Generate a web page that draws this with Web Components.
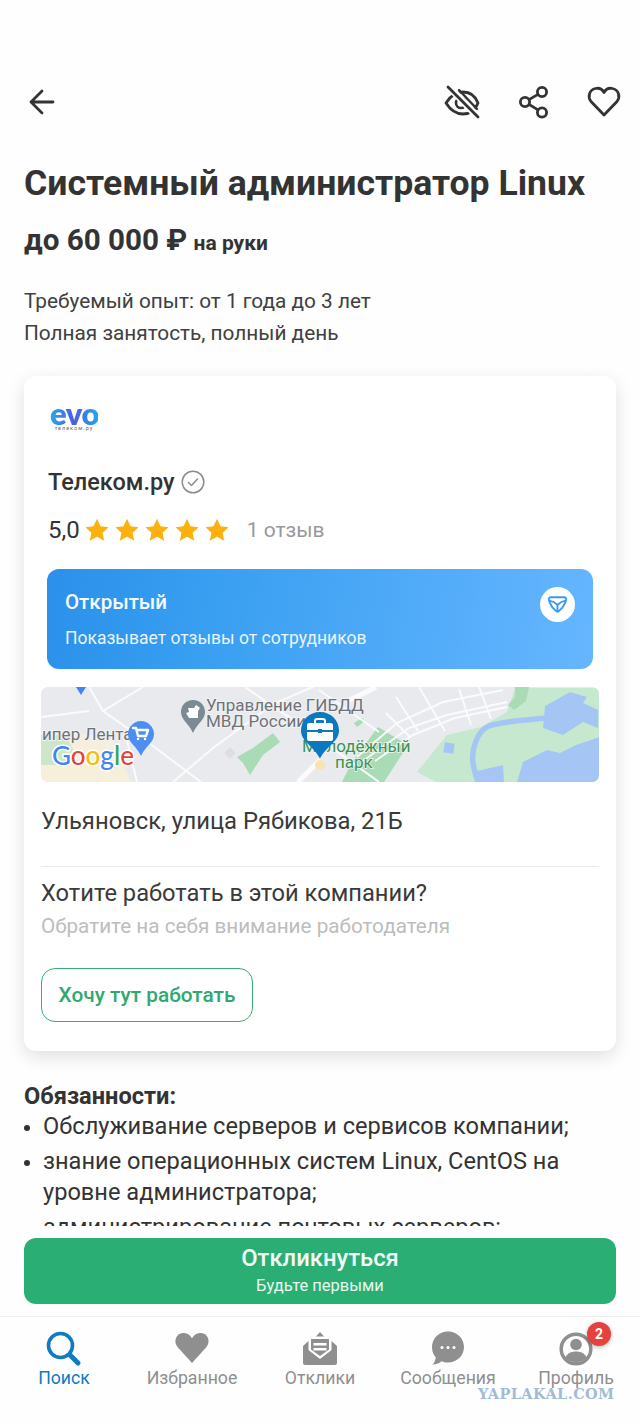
<!DOCTYPE html>
<html lang="ru">
<head>
<meta charset="utf-8">
<title>Системный администратор Linux</title>
<style>
  html, body { margin: 0; padding: 0; background: #fefefe; }
  body { width: 640px; height: 1423px; overflow: hidden; font-family: Roboto, "Liberation Sans", sans-serif; color: #333; }
</style>
</head>
<body>
<job-page>
  <app-toolbar></app-toolbar>
  <job-summary title-text="Системный администратор Linux" salary="до 60 000 ₽" salary-note="на руки">
    <div>Требуемый опыт: от 1 года до 3 лет</div>
    <div>Полная занятость, полный день</div>
  </job-summary>
  <company-card name="Телеком.ру" rating="5,0" reviews="1 отзыв" address="Ульяновск, улица Рябикова, 21Б"></company-card>
  <job-duties heading="Обязанности:">
    <duty-item>Обслуживание серверов и сервисов компании;</duty-item>
    <duty-item>знание операционных систем Linux, CentOS на уровне администратора;</duty-item>
    <duty-item>администрирование почтовых серверов;</duty-item>
  </job-duties>
  <apply-button slot="footer" label="Откликнуться" note="Будьте первыми"></apply-button>
  <bottom-nav slot="footer"></bottom-nav>
</job-page>

<script>
class JobPage extends HTMLElement {
    constructor() {
        super();
        this.attachShadow({ mode: 'open' });
        this.shadowRoot.innerHTML = `
            <style>
                :host { display: flex; flex-direction: column; height: 1423px; position: relative; }
                .content { height: 1226px; overflow: hidden; flex: none; }
            </style>
            <div class="content"><slot></slot></div>
            <slot name="footer"></slot>
        `;
    }
}
customElements.define('job-page', JobPage);

class AppToolbar extends HTMLElement {
    constructor() {
        super();
        this.attachShadow({ mode: 'open' });
        this.shadowRoot.innerHTML = `
            <style>
                :host { display: flex; align-items: center; height: 36px; padding: 84px 18px 0 24px; }
                svg { width: 36px; height: 36px; display: block; fill: none; stroke: #333; stroke-width: 2.800; stroke-linecap: round; stroke-linejoin: round; }
                .spacer { flex: 1; }
                .share { margin: 0 34px 0 36px; }
            </style>
            <svg viewBox="0 0 36 36"><path d="M7 18h22M18 7 7 18l11 11"/></svg>
            <div class="spacer"></div>
            <svg viewBox="0 0 36 36">
                <path d="M2 19C7 11 12 8 19 8c7 0 12 3 15 11-3 8-9 11-15 11C12 30 7 27 2 19z"/>
                <circle cx="17" cy="19" r="5" stroke-width="2.600"/>
                <path d="M7 5l26 27" stroke="#fefefe" stroke-width="7"/>
                <path d="M4 3l30 30"/>
                <path d="M15 6l18 19" stroke-width="2.400"/>
            </svg>
            <svg class="share" viewBox="0 0 36 36">
                <circle cx="9" cy="18" r="4.600"/><circle cx="26" cy="8" r="4.600"/><circle cx="26" cy="28.500" r="4.600"/>
                <path d="M13 15.600 22 10.400M13 20.400l9 5.500"/>
            </svg>
            <svg viewBox="0 0 36 36"><path d="M18 31 5 17.500C1.500 13 3 6 9.500 4.500c3.800-.8 6.800.8 8.500 4 1.700-3.200 4.700-4.800 8.500-4C33 6 34.500 13 31 17.500z"/></svg>
        `;
    }
}
customElements.define('app-toolbar', AppToolbar);

class JobSummary extends HTMLElement {
    constructor() {
        super();
        this.attachShadow({ mode: 'open' });
        this.shadowRoot.innerHTML = `
            <style>
                :host { display: block; padding: 41px 24px 0; }
                h1 { margin: 0; font: 700 35.600px/44px Roboto, sans-serif; color: #333; white-space: nowrap; }
                .salary { margin-top: 15px; font: 700 29.600px/40px Roboto, sans-serif; color: #333; }
                .salary small { font-size: 21px; margin-left: -1px; }
                .meta { margin-top: 22px; font: 400 20.800px/32px Roboto, sans-serif; color: #404040; }
            </style>
            <h1 id="title"></h1>
            <div class="salary"><span id="salary"></span> <small id="note"></small></div>
            <div class="meta"><slot></slot></div>
        `;
    }

    connectedCallback() {
        this.shadowRoot.getElementById('title').textContent = this.getAttribute('title-text');
        this.shadowRoot.getElementById('salary').textContent = this.getAttribute('salary');
        this.shadowRoot.getElementById('note').textContent = this.getAttribute('salary-note');
    }
}
customElements.define('job-summary', JobSummary);

class RatingStars extends HTMLElement {
    constructor() {
        super();
        this.attachShadow({ mode: 'open' });
        const star = '<svg viewBox="0 0 24 24"><path d="M12 .8l3.500 7.400 8 1-5.900 5.500 1.600 8L12 18.700l-7.200 4 1.600-8L.5 9.200l8-1z"/></svg>';
        this.shadowRoot.innerHTML = `
            <style>
                :host { display: flex; gap: 6px; }
                svg { width: 24px; height: 24px; display: block; fill: #fdb10e; }
            </style>
            ${star.repeat(5)}
        `;
    }
}
customElements.define('rating-stars', RatingStars);

class OpenBanner extends HTMLElement {
    constructor() {
        super();
        this.attachShadow({ mode: 'open' });
        this.shadowRoot.innerHTML = `
            <style>
                :host { display: flex; align-items: center; justify-content: space-between; height: 100px; margin: 0 6px; padding: 0 18px; border-radius: 12px; color: #fff; background: linear-gradient(100deg, #2a90ea 0%, #399ff1 30%, #66b6ff 100%); box-sizing: border-box; }
                .title { font: 500 20.500px/24px Roboto, sans-serif; color: #f6fbff; }
                .text { margin-top: 13px; font: 400 17.500px/22px Roboto, sans-serif; color: #e9f4ff; }
                .badge { width: 35px; height: 35px; border-radius: 50%; background: #fff; display: flex; align-items: center; justify-content: center; margin-top: -30px; }
                svg { width: 23px; height: 23px; fill: none; stroke: #3a9cf0; stroke-width: 2; stroke-linejoin: round; stroke-linecap: round; }
            </style>
            <div>
                <div class="title">Открытый</div>
                <div class="text">Показывает отзывы от сотрудников</div>
            </div>
            <div class="badge">
                <svg viewBox="0 0 24 24"><path d="M5 4.500h14c1.500 0 2.500 1.200 2 2.700l-1.200 3.300c-1.300 3.500-4 6.500-6.600 8.500-.8.600-1.600.600-2.400 0-2.600-2-5.300-5-6.600-8.500L3 7.200c-.5-1.500.5-2.700 2-2.700z"/><path d="M3.500 8c3 .5 6 2 8.500 4.500C14.500 10 17.500 8.500 20.500 8M12 12.500V19"/></svg>
            </div>
        `;
    }
}
customElements.define('open-banner', OpenBanner);

// Static map picture, coordinates are map pixels from the top left corner
class MapView extends HTMLElement {
    constructor() {
        super();
        this.attachShadow({ mode: 'open' });
        this.shadowRoot.innerHTML = `
            <style>
                :host { display: block; height: 95px; border-radius: 7px; overflow: hidden; background: #e8eaed; position: relative; }
                svg { display: block; width: 100%; height: 100%; }
                text { font-family: Roboto, sans-serif; }
                .label { font-size: 17px; fill: #6e7378; stroke: #f1f2f4; stroke-width: 2px; paint-order: stroke; }
                .park { font-size: 17px; fill: #3c9158; stroke: #eef5ee; stroke-width: 1.500px; paint-order: stroke; }
                .google { font: 500 26px Lato, sans-serif; stroke: #fff; stroke-width: 3px; paint-order: stroke; }
            </style>
            <svg viewBox="0 0 558 95">
                <path d="M0 45h30l40 6 20 44H0z" fill="#f6efdc"/>
                <path d="M0 48h24l8 14-8 16H0z" fill="#cde5c8"/>
                <path d="M196 70l16-9 20-15 7 9-17 13-13 20-7-12z" fill="#a9dbb5"/>
                <rect x="185" y="62" width="8" height="8" fill="#dcdee1" transform="rotate(45 189 66)"/>
                <path d="M337 40l30 18-24 37h-42l10-20z" fill="#a9dbb5"/>
                <path d="M313 36l8-5 3 3-8 6z" fill="#a9dbb5"/>
                <path d="M376 85l30-37 34-8 26-15 8-24h85v94H395z" fill="#c6e8cf"/>
                <path d="M474 0h14l-3 14-12 9-6-5 7-8z" fill="#a9dbb5"/>
                <g fill="none" stroke="#fafbfc" stroke-width="2">
                    <path d="M48 0l14 24 46 32 52 39"/>
                    <path d="M230 17l108 78"/>
                    <path d="M204 0l66 46M278 3l60 42M132 95l40-34 60-44 70-30"/>
                    <path d="M316 70l40-34 46-21 60-12M322 74l46-33 38-13 60-13M334 74l38-26 42-17 52-11"/>
                    <path d="M355 10l22 34M378 0l26 44M418 2l12 36M438 0l12 32M345 26l24 24"/>
                    <path d="M0 30l48-6M62 24l40-24"/>
                    <path d="M86 53l10 42"/>
                </g>
                <path d="M257 95l22-22M305 15l30-15" fill="none" stroke="#fbfbfc" stroke-width="5"/>
                <path d="M504 19l25-14 17 5-4 6 15 7v18l-15-6-20 13-20-7z" fill="#a5c6f5"/>
                <path d="M506 31c-20 2-44 3-58 8-12 5-18 24-16 37 1 7 3 13 5 19" fill="none" stroke="#a5c6f5" stroke-width="5.500"/>
                <path d="M436 84l26-6 1 17h-27zM476 95l6-20 24-12 13 3 16-8 24-8v45z" fill="#a5c6f5"/>
                <rect x="403" y="56" width="10" height="10" fill="#a5c6f5" transform="rotate(8 408 61)"/>
                <path d="M35 0h10l-5 8z" fill="#3f86f0"/>
                <text class="label" x="165" y="24">Управление ГИБДД</text>
                <text class="label" x="165" y="40">МВД России</text>
                <text class="label" x="1" y="53">ипер Лента</text>
                <text class="park" x="261" y="65">Молодёжный</text>
                <text class="park" x="294" y="81">парк</text>
                <path d="M152 13c-7 0-12 5-12 12 0 8 7 10 12 21 5-11 12-13 12-21 0-7-5-12-12-12z" fill="#7b8b96"/>
                <path d="M147 21h6l2-3 4 3-2 3v7h-9l-3-5 3-1z" fill="#fff"/>
                <path d="M100 34c-7 0-13 6-13 13 0 9 8 11 13 22 5-11 13-13 13-22 0-7-6-13-13-13z" fill="#4d8ff0"/>
                <path d="M92 41h3l2 8h8l2-6h-11M97 52h.1M104 52h.1" fill="none" stroke="#fff" stroke-width="2.400" stroke-linejoin="round" stroke-linecap="round"/>
                <text class="google" x="11" y="78"><tspan fill="#4285f4">G</tspan><tspan fill="#ea4335">o</tspan><tspan fill="#fbbc05">o</tspan><tspan fill="#4285f4">g</tspan><tspan fill="#34a853">l</tspan><tspan fill="#ea4335">e</tspan></text>
                <circle cx="279" cy="78" r="5" fill="#f9e3b0"/>
                <path d="M279 25c-10.500 0-19 8-19 18.500 0 11 12 15 19 28 7-13 19-17 19-28C298 33 289.500 25 279 25z" fill="#0b78bf"/>
                <path d="M268 36h22c1 0 2 1 2 2v5h-26v-5c0-1 1-2 2-2zM266 45h26v7c0 1-1 2-2 2h-22c-1 0-2-1-2-2z" fill="#fff"/>
                <path d="M274 36v-2c0-1 1-2 2-2h6c1 0 2 1 2 2v2" fill="none" stroke="#fff" stroke-width="2"/>
                <rect x="277" y="42" width="4" height="4" fill="#0b78bf"/>
            </svg>
        `;
    }
}
customElements.define('map-view', MapView);

class CompanyCard extends HTMLElement {
    constructor() {
        super();
        this.attachShadow({ mode: 'open' });
        this.shadowRoot.innerHTML = `
            <style>
                :host { display: block; margin: 27px 24px 0; padding: 29px 17px 29px; height: 617px; background: #fff; border-radius: 12px; box-shadow: 0 6px 18px rgba(0,0,0,.12); }
                .logo { height: 30px; margin-left: 9px; width: 48px; text-align: center; }
                .evo { font: 800 31px/17px Lato, sans-serif; letter-spacing: -.5px; background: linear-gradient(90deg, #2aa7ea 0%, #4a5ee0 50%, #23a6ee 100%); -webkit-background-clip: text; background-clip: text; color: transparent; display: block; height: 20px; }
                .logo small { display: block; font: 400 5.500px/6px Roboto, sans-serif; letter-spacing: 1px; color: #666; white-space: nowrap; }
                .name { display: flex; align-items: center; gap: 6px; margin: 31px 0 0 7px; font: 500 23.500px/32px Roboto, sans-serif; color: #333; }
                .name svg { width: 24px; height: 24px; fill: none; stroke: #8c8c8c; stroke-width: 1.500; stroke-linecap: round; stroke-linejoin: round; }
                .rating { display: flex; align-items: center; margin: 16px 0 0 7px; height: 32px; font: 400 24px/32px Roboto, sans-serif; color: #333; }
                rating-stars { margin-left: 5px; }
                .reviews { margin-left: 18px; font-size: 21px; color: #999; }
                open-banner { margin-top: 23px; }
                map-view { margin-top: 18px; }
                .address { margin-top: 24px; font: 400 23.800px/30px Roboto, sans-serif; color: #3a3a3a; }
                hr { margin: 30px 0 0; border: 0; height: 1px; background: #e9e9e9; }
                .ask { margin-top: 11px; font: 400 23.700px/30px Roboto, sans-serif; color: #3a3a3a; }
                .hint { margin-top: 5px; font: 400 20.700px/26px Roboto, sans-serif; color: #bdbdbd; }
                button { display: block; margin-top: 29px; width: 212px; height: 54px; box-sizing: border-box; padding: 0; background: #fff; border: 1.500px solid #36ad78; border-radius: 14px; font: 500 20.800px/1 Roboto, sans-serif; color: #2fa96f; }
            </style>
            <div class="logo"><span class="evo">evo</span><small>телеком.ру</small></div>
            <div class="name"><span id="name"></span>
                <svg viewBox="0 0 24 24"><circle cx="12" cy="12" r="10.800"/><path d="M7.500 12.500l3 3 6-6.500"/></svg>
            </div>
            <div class="rating"><span id="rating"></span><rating-stars></rating-stars><span class="reviews" id="reviews"></span></div>
            <open-banner></open-banner>
            <map-view></map-view>
            <div class="address" id="address"></div>
            <hr>
            <div class="ask">Хотите работать в этой компании?</div>
            <div class="hint">Обратите на себя внимание работодателя</div>
            <button>Хочу тут работать</button>
        `;
    }

    connectedCallback() {
        ['name', 'rating', 'reviews', 'address'].forEach(key => {
            this.shadowRoot.getElementById(key).textContent = this.getAttribute(key);
        });
    }
}
customElements.define('company-card', CompanyCard);

class JobDuties extends HTMLElement {
    constructor() {
        super();
        this.attachShadow({ mode: 'open' });
        this.shadowRoot.innerHTML = `
            <style>
                :host { display: block; margin-top: 30px; padding: 0 24px; }
                h2 { margin: 0; font: 700 23.600px/30px Roboto, sans-serif; color: #333; }
            </style>
            <h2 id="heading"></h2>
            <slot></slot>
        `;
    }

    connectedCallback() {
        this.shadowRoot.getElementById('heading').textContent = this.getAttribute('heading');
    }
}
customElements.define('job-duties', JobDuties);

class DutyItem extends HTMLElement {
    constructor() {
        super();
        this.attachShadow({ mode: 'open' });
        this.shadowRoot.innerHTML = `
            <style>
                :host { display: flex; margin-bottom: 4px; font: 400 23.600px/31px Roboto, sans-serif; color: #333; }
                .dot { flex: none; width: 6px; height: 6px; margin: 14px 13px 0 0; border-radius: 50%; background: #333; }
            </style>
            <span class="dot"></span>
            <span><slot></slot></span>
        `;
    }
}
customElements.define('duty-item', DutyItem);

class ApplyButton extends HTMLElement {
    constructor() {
        super();
        this.attachShadow({ mode: 'open' });
        this.shadowRoot.innerHTML = `
            <style>
                :host { display: flex; flex-direction: column; align-items: center; margin: 12px 24px 0; height: 66px; box-sizing: border-box; padding-top: 6px; background: #2bae73; border-radius: 12px; color: #fff; }
                .label { font: 500 23.800px/28px Roboto, sans-serif; color: #f3fbf7; }
                .note { margin-top: 3px; font: 400 16.500px/22px Roboto, sans-serif; color: #e8f7f0; }
            </style>
            <div class="label" id="label"></div>
            <div class="note" id="note"></div>
        `;
    }

    connectedCallback() {
        this.shadowRoot.getElementById('label').textContent = this.getAttribute('label');
        this.shadowRoot.getElementById('note').textContent = this.getAttribute('note');
    }
}
customElements.define('apply-button', ApplyButton);

class NavItem extends HTMLElement {
    constructor() {
        super();
        this.attachShadow({ mode: 'open' });
        this.shadowRoot.innerHTML = `
            <style>
                :host { display: flex; flex-direction: column; align-items: center; flex: 1 1 0; position: relative; color: #8f8f8f; font: 400 17.700px/20px Roboto, sans-serif; white-space: nowrap; }
                :host([active]) { color: #0f7bc2; }
                .icon { height: 38px; }
                ::slotted(svg) { width: 40px; height: 40px; display: block; }
            </style>
            <div class="icon"><slot></slot></div>
            <div class="label"></div>
        `;
    }

    connectedCallback() {
        this.shadowRoot.querySelector('.label').textContent = this.getAttribute('label');
    }
}
customElements.define('nav-item', NavItem);

class NavBadge extends HTMLElement {
    constructor() {
        super();
        this.attachShadow({ mode: 'open' });
        this.shadowRoot.innerHTML = `
            <style>
                :host { position: absolute; left: 75px; top: -8px; width: 24px; height: 24px; border-radius: 50%; background: #e5413f; color: #fff; font: 700 14px/24px Roboto, sans-serif; text-align: center; box-shadow: 0 1px 4px rgba(0,0,0,.3); }
            </style>
            <slot></slot>
        `;
    }
}
customElements.define('nav-badge', NavBadge);

class BottomNav extends HTMLElement {
    constructor() {
        super();
        this.attachShadow({ mode: 'open' });
        this.shadowRoot.innerHTML = `
            <style>
                :host { display: flex; margin-top: 12px; padding-top: 13px; border-top: 1px solid #efefef; position: relative; }
                .mark { position: absolute; left: 478px; top: 69px; font: 700 14.500px/16px "DejaVu Serif", serif; letter-spacing: .4px; color: #a3bbd4; white-space: nowrap; }
            </style>
            <nav-item label="Поиск" active>
                <svg viewBox="0 0 40 40" fill="none" stroke="#0f7bc2"><circle cx="16.500" cy="15.500" r="12" stroke-width="3.600"/><path d="M26 25l8 8" stroke-width="5" stroke-linecap="round"/></svg>
            </nav-item>
            <nav-item label="Избранное">
                <svg viewBox="0 0 40 40" fill="#8f8f8f"><path d="M20 33 5.500 17C1.500 12 3.500 4 10 3.200c4-.5 8 1.500 10 5 2-3.500 6-5.500 10-5C36.500 4 38.500 12 34.500 17z"/></svg>
            </nav-item>
            <nav-item label="Отклики">
                <svg viewBox="0 0 40 40"><path d="M3 16 9 10.500V7h6.500L20 2l4.500 5H31v3.500l6 5.500v17c0 1.200-.8 2-2 2H5c-1.200 0-2-.8-2-2z" fill="#8f8f8f"/><path d="M9 7h22v13l-11 8.500L9 20z" fill="#fff" stroke="#fff" stroke-width="1"/><path d="M11 9h18v10.500L20 26l-9-6.500z" fill="#8f8f8f"/><path d="M13.500 13h13v2.600h-13zM13.500 18h13v2.600h-13z" fill="#fff"/></svg>
            </nav-item>
            <nav-item label="Сообщения">
                <svg viewBox="0 0 40 40"><g transform="translate(-1 -1.500)"><path d="M21 3c9 0 16 7 16 15.500S30 34 21 34c-2.500 0-4.500-.5-6.500-1.300-2 1.800-5 3.300-9 3.300 2-2 3-4.500 3.300-7C6.300 26 5 22.500 5 18.500 5 10 12 3 21 3z" fill="#8f8f8f"/><g fill="#fff"><circle cx="15" cy="19" r="1.500"/><circle cx="21" cy="19" r="1.500"/><circle cx="27" cy="19" r="1.500"/></g></g></svg>
            </nav-item>
            <nav-item label="Профиль">
                <svg viewBox="0 0 40 40"><circle cx="20" cy="19" r="14.800" fill="none" stroke="#8f8f8f" stroke-width="3.500"/><circle cx="20" cy="14.500" r="5.800" fill="#8f8f8f"/><path d="M9.500 27.500c1.500-4 5.500-6 10.500-6s9 2 10.500 6c-2.500 3-6.500 4.500-10.500 4.500s-8-1.500-10.500-4.500z" fill="#8f8f8f"/></svg>
                <nav-badge>2</nav-badge>
            </nav-item>
            <div class="mark">YAPLAKAL.COM</div>
        `;
    }
}
customElements.define('bottom-nav', BottomNav);
</script>
</body>
</html>
